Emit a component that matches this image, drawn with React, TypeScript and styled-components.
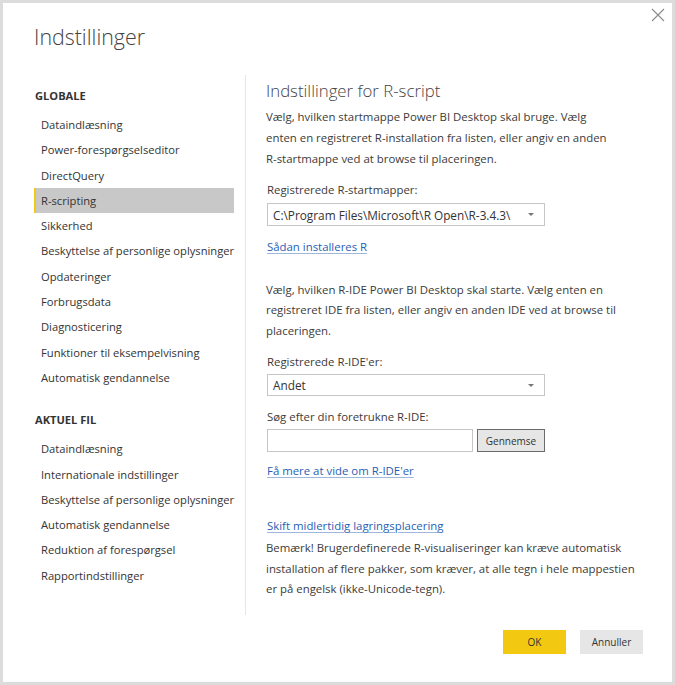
import React from "react";
import styled, { createGlobalStyle, css } from "styled-components";

const Global = createGlobalStyle`
  html, body { margin: 0; padding: 0; background: #ffffff; }
  body { font-family: "Open Sans", "Noto Sans", "Liberation Sans", sans-serif; color: #3b3b3b; }
  * { box-sizing: border-box; }
`;

const Dialog = styled.div`
  position: relative;
  width: 675px;
  height: 685px;
  border: 3px solid #dcdcdc;
  background: #fff;
  display: flex;
  flex-direction: column;
`;

const CloseButton = styled.button`
  position: absolute;
  top: 3px;
  right: 5px;
  width: 18px;
  height: 18px;
  padding: 0;
  border: none;
  background: transparent;
  display: flex;
  align-items: center;
  justify-content: center;
`;

const Title = styled.h1`
  margin: 0;
  padding: 18px 0 0 31px;
  font-size: 21.4px;
  font-weight: 300;
  line-height: 32px;
  color: #444;
  height: 72px;
`;

const Body = styled.div`
  display: flex;
  height: 540px;
`;

const Sidebar = styled.nav`
  flex: 0 0 212px;
  margin-left: 31px;
  border-right: 1px solid #e6e6e6;
  padding-top: 11px;
`;

const Group = styled.div`
  & + & { margin-top: 20px; }
`;

const GroupHeading = styled.div`
  font-size: 11.1px;
  font-weight: 700;
  color: #333;
  height: 20px;
  line-height: 20px;
  margin-bottom: 6px;
  padding-left: 1px;
`;

const NavItem = styled.div<{ $active?: boolean }>`
  width: 200px;
  height: 25.3px;
  line-height: 25px;
  padding-left: 5px;
  font-size: 11.2px;
  color: #333;
  white-space: nowrap;
  border-left: 2px solid transparent;
  ${(p) =>
    p.$active &&
    css`
      background: #c8c8c8;
      border-left-color: #f2c811;
    `}
`;

const Content = styled.section`
  flex: 1;
  min-width: 0;
  padding: 4px 20px 0 20px;
`;

const SectionTitle = styled.h2`
  margin: 0;
  font-size: 16.8px;
  font-weight: 300;
  color: #444;
  line-height: 24px;
  height: 26px;
`;

const Para = styled.p<{ $mt?: number; $lh?: number }>`
  margin: ${(p) => p.$mt ?? 0}px 0 0 0;
  font-size: 11.4px;
  line-height: ${(p) => p.$lh ?? 20.4}px;
  color: #3b3b3b;
  white-space: nowrap;
`;

const Label = styled.div<{ $mt?: number }>`
  margin-top: ${(p) => p.$mt ?? 0}px;
  font-size: 11.4px;
  line-height: 18px;
  color: #3b3b3b;
  padding-left: 1px;
`;

const Select = styled.div<{ $mt?: number; $h?: number }>`
  margin-top: ${(p) => p.$mt ?? 0}px;
  margin-left: 1px;
  width: 278px;
  height: ${(p) => p.$h ?? 22}px;
  border: 1px solid #c6c6c6;
  display: flex;
  align-items: center;
  justify-content: space-between;
  padding: 0 10px 0 5px;
  font-size: 11.8px;
  color: #333;
`;

const Caret = styled.span`
  width: 0;
  height: 0;
  border-left: 3px solid transparent;
  border-right: 3px solid transparent;
  border-top: 3px solid #777;
`;

const Link = styled.a<{ $mt?: number }>`
  display: block;
  width: max-content;
  margin-top: ${(p) => p.$mt ?? 0}px;
  font-size: 11.4px;
  line-height: 18px;
  color: #1f5fb4;
  text-decoration: underline;
  text-decoration-color: #9db7dd;
  text-underline-offset: 2px;
  padding-left: 1px;
`;

const Row = styled.div<{ $mt?: number }>`
  display: flex;
  gap: 4px;
  margin-top: ${(p) => p.$mt ?? 0}px;
  margin-left: 1px;
`;

const TextInput = styled.div`
  width: 206px;
  height: 23px;
  border: 1px solid #c6c6c6;
`;

const BrowseButton = styled.button`
  width: 68px;
  height: 23px;
  border: 1px solid #6b6b6b;
  background: #e6e6e6;
  font-family: inherit;
  font-size: 10px;
  color: #333;
  padding: 0;
`;

const Footer = styled.div`
  display: flex;
  justify-content: flex-end;
  gap: 14px;
  padding: 15px 29px 0 0;
`;

const FooterButton = styled.button<{ $primary?: boolean }>`
  width: 63px;
  height: 24px;
  border: none;
  font-family: inherit;
  font-size: 10px;
  color: #333;
  background: ${(p) => (p.$primary ? "#f2c811" : "#e6e6e6")};
`;

const globalItems = [
  "Dataindlæsning",
  "Power-forespørgselseditor",
  "DirectQuery",
  "R-scripting",
  "Sikkerhed",
  "Beskyttelse af personlige oplysninger",
  "Opdateringer",
  "Forbrugsdata",
  "Diagnosticering",
  "Funktioner til eksempelvisning",
  "Automatisk gendannelse",
];

const fileItems = [
  "Dataindlæsning",
  "Internationale indstillinger",
  "Beskyttelse af personlige oplysninger",
  "Automatisk gendannelse",
  "Reduktion af forespørgsel",
  "Rapportindstillinger",
];

export default function App() {
  return (
    <>
      <Global />
      <Dialog>
        <CloseButton aria-label="Luk">
          <svg width="14" height="14" viewBox="0 0 14 14">
            <path d="M1 1 L13 13 M13 1 L1 13" stroke="#8a8a8a" strokeWidth="1.1" />
          </svg>
        </CloseButton>
        <Title>Indstillinger</Title>
        <Body>
          <Sidebar>
            <Group>
              <GroupHeading>GLOBALE</GroupHeading>
              {globalItems.map((t) => (
                <NavItem key={t} $active={t === "R-scripting"}>
                  {t}
                </NavItem>
              ))}
            </Group>
            <Group>
              <GroupHeading>AKTUEL FIL</GroupHeading>
              {fileItems.map((t) => (
                <NavItem key={t}>{t}</NavItem>
              ))}
            </Group>
          </Sidebar>
          <Content>
            <SectionTitle>Indstillinger for R-script</SectionTitle>
            <Para $mt={1} $lh={21}>
              Vælg, hvilken startmappe Power BI Desktop skal bruge. Vælg
              <br />
              enten en registreret R-installation fra listen, eller angiv en anden
              <br />
              R-startmappe ved at browse til placeringen.
            </Para>
            <Label $mt={12}>Registrerede R-startmapper:</Label>
            <Select $mt={4} $h={23}>
              <span>C:\Program Files\Microsoft\R Open\R-3.4.3\</span>
              <Caret />
            </Select>
            <Link $mt={12}>Sådan installeres R</Link>
            <Para $mt={24}>
              Vælg, hvilken R-IDE Power BI Desktop skal starte. Vælg enten en
              <br />
              registreret IDE fra listen, eller angiv en anden IDE ved at browse til
              <br />
              placeringen.
            </Para>
            <Label $mt={12}>Registrerede R-IDE'er:</Label>
            <Select $mt={3}>
              <span>Andet</span>
              <Caret />
            </Select>
            <Label $mt={12}>Søg efter din foretrukne R-IDE:</Label>
            <Row $mt={3}>
              <TextInput />
              <BrowseButton>Gennemse</BrowseButton>
            </Row>
            <Link $mt={10}>Få mere at vide om R-IDE'er</Link>
            <Link $mt={37}>Skift midlertidig lagringsplacering</Link>
            <Para $mt={3}>
              Bemærk! Brugerdefinerede R-visualiseringer kan kræve automatisk
              <br />
              installation af flere pakker, som kræver, at alle tegn i hele mappestien
              <br />
              er på engelsk (ikke-Unicode-tegn).
            </Para>
          </Content>
        </Body>
        <Footer>
          <FooterButton $primary>OK</FooterButton>
          <FooterButton>Annuller</FooterButton>
        </Footer>
      </Dialog>
    </>
  );
}
